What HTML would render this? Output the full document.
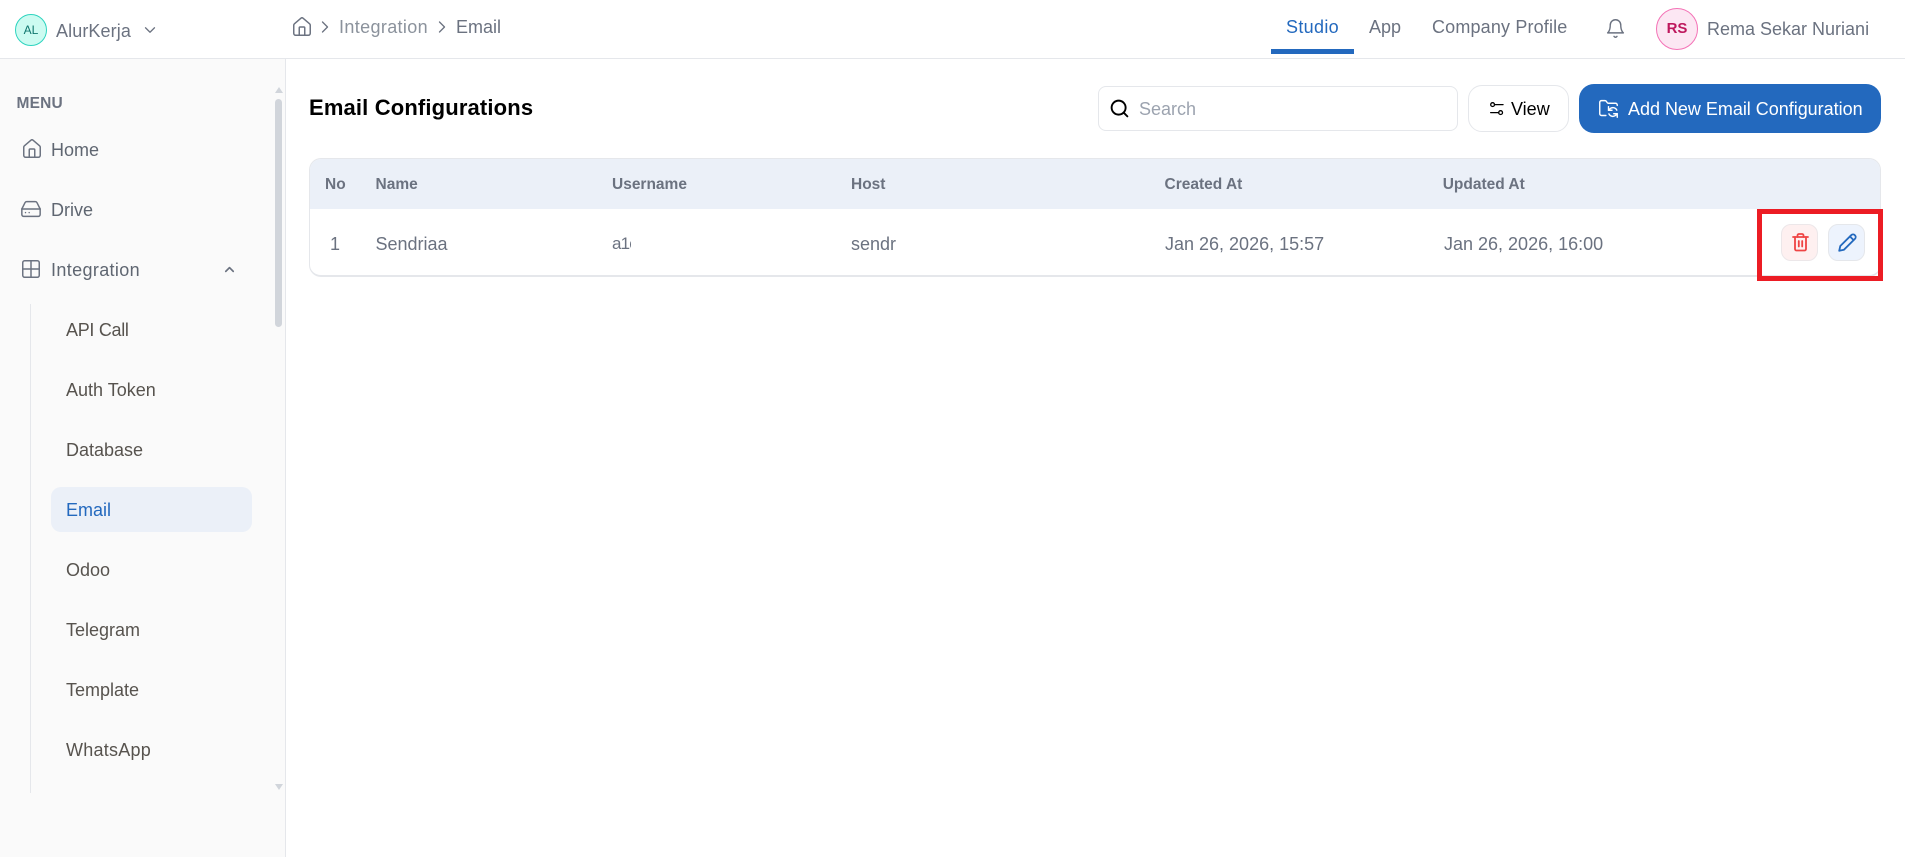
<!DOCTYPE html>
<html lang="en"><head><meta charset="utf-8"><title>Email Configurations</title>
<style>
*{box-sizing:border-box}
html,body{margin:0;padding:0;width:1905px;height:857px;overflow:hidden;background:#fff;font-family:"Liberation Sans",sans-serif;color:#6b7280}
.a{position:absolute}
.t{position:absolute;white-space:nowrap;line-height:20px;font-size:18px}
svg{position:absolute;fill:none;stroke-linecap:round;stroke-linejoin:round}
.th{font-size:15.5px;font-weight:700;color:#6b7280;top:175px}
.td{top:234px;color:#6b7280}
.s{left:66px;color:#57534e}
.n{color:#5f6671}
</style></head><body>
<!-- header -->
<div class="a" style="left:0;top:58px;width:1905px;height:1px;background:#e5e7eb"></div>
<div class="a" style="left:15px;top:14px;width:32px;height:32px;border-radius:50%;background:#ccfbf1;border:1px solid #2dd4bf;color:#0f766e;font-size:12px;line-height:30px;text-align:center">AL</div>
<div class="t" style="left:56px;top:21px;letter-spacing:.1px">AlurKerja</div>
<svg style="left:141px;top:21px" width="18" height="18" viewBox="0 0 24 24" stroke="#6b7280" stroke-width="1.7"><path d="m6 9 6 6 6-6"/></svg>
<svg style="left:290.5px;top:16px" width="22" height="22" viewBox="0 0 24 24" stroke="#6b7280" stroke-width="1.6"><path d="M15 21v-8a1 1 0 0 0-1-1h-4a1 1 0 0 0-1 1v8"/><path d="M3 10a2 2 0 0 1 .709-1.528l7-5.999a2 2 0 0 1 2.582 0l7 5.999A2 2 0 0 1 21 10v9a2 2 0 0 1-2 2H5a2 2 0 0 1-2-2z"/></svg>
<svg style="left:314.5px;top:17px" width="20" height="20" viewBox="0 0 24 24" stroke="#6b7280" stroke-width="1.6"><path d="m9 18 6-6-6-6"/></svg>
<div class="t" style="left:339px;top:17px;letter-spacing:.36px;color:#8b929c">Integration</div>
<svg style="left:431.5px;top:17px" width="20" height="20" viewBox="0 0 24 24" stroke="#6b7280" stroke-width="1.6"><path d="m9 18 6-6-6-6"/></svg>
<div class="t" style="left:456px;top:17px;color:#6b7280">Email</div>
<div class="t" style="left:1286px;top:17px;letter-spacing:.33px;color:#2369be">Studio</div>
<div class="a" style="left:1271px;top:49px;width:83px;height:5px;background:#2369be"></div>
<div class="t" style="left:1369px;top:17px">App</div>
<div class="t" style="left:1432px;top:17px;letter-spacing:.16px">Company Profile</div>
<svg style="left:1604.5px;top:17.5px" width="21" height="21" viewBox="0 0 24 24" stroke="#6b7280" stroke-width="1.6"><path d="M6 8a6 6 0 0 1 12 0c0 7 3 9 3 9H3s3-2 3-9"/><path d="M10.3 21a1.94 1.94 0 0 0 3.4 0"/></svg>
<div class="a" style="left:1656px;top:8px;width:42px;height:42px;border-radius:50%;background:#fce7f3;border:1px solid #f472b6;color:#be185d;font-size:15px;font-weight:700;line-height:40px;text-align:center">RS</div>
<div class="t" style="left:1707px;top:19px">Rema Sekar Nuriani</div>

<!-- sidebar -->
<div class="a" style="left:0;top:59px;width:286px;height:798px;background:#fafafa;border-right:1px solid #e5e7eb"></div>
<div class="t" style="left:16.5px;top:94px;font-size:15.5px;font-weight:700;letter-spacing:.2px">MENU</div>
<div class="a" style="left:275px;top:87px;width:0;height:0;border-left:4px solid transparent;border-right:4px solid transparent;border-bottom:6px solid #d1d5db"></div>
<div class="a" style="left:275px;top:99px;width:7px;height:228px;border-radius:4px;background:#d1d5db"></div>
<div class="a" style="left:275px;top:784px;width:0;height:0;border-left:4px solid transparent;border-right:4px solid transparent;border-top:6px solid #d1d5db"></div>
<svg style="left:20.5px;top:137.5px" width="22" height="22" viewBox="0 0 24 24" stroke="#6b7280" stroke-width="1.6"><path d="M15 21v-8a1 1 0 0 0-1-1h-4a1 1 0 0 0-1 1v8"/><path d="M3 10a2 2 0 0 1 .709-1.528l7-5.999a2 2 0 0 1 2.582 0l7 5.999A2 2 0 0 1 21 10v9a2 2 0 0 1-2 2H5a2 2 0 0 1-2-2z"/></svg>
<div class="t n" style="left:51px;top:140px">Home</div>
<svg style="left:20px;top:198px" width="22" height="22" viewBox="0 0 24 24" stroke="#6b7280" stroke-width="1.6"><path d="M22 12H2"/><path d="M5.45 5.11 2 12v6a2 2 0 0 0 2 2h16a2 2 0 0 0 2-2v-6l-3.45-6.89A2 2 0 0 0 16.76 4H7.24a2 2 0 0 0-1.79 1.11z"/><path d="M6 16h.01M10 16h.01"/></svg>
<div class="t n" style="left:51px;top:200px">Drive</div>
<svg style="left:20px;top:258px" width="22" height="22" viewBox="0 0 24 24" stroke="#6b7280" stroke-width="1.6"><rect x="3" y="3" width="18" height="18" rx="2"/><path d="M3 12h18M12 3v18"/></svg>
<div class="t n" style="left:51px;top:260px;letter-spacing:.36px">Integration</div>
<svg style="left:221.5px;top:262px" width="15" height="15" viewBox="0 0 24 24" stroke="#6b7280" stroke-width="2.6"><path d="m18 15-6-6-6 6"/></svg>
<div class="a" style="left:30px;top:304px;width:1px;height:489px;background:#e5e7eb"></div>
<div class="t s" style="top:320px;letter-spacing:-.3px">API Call</div>
<div class="t s" style="top:380px">Auth Token</div>
<div class="t s" style="top:440px">Database</div>
<div class="a" style="left:51px;top:487px;width:201px;height:45px;border-radius:10px;background:#ebf0f8"></div>
<div class="t s" style="top:500px;color:#2369be">Email</div>
<div class="t s" style="top:560px">Odoo</div>
<div class="t s" style="top:620px">Telegram</div>
<div class="t s" style="top:680px">Template</div>
<div class="t s" style="top:740px;letter-spacing:.25px">WhatsApp</div>

<!-- toolbar -->
<div class="t" style="left:309px;top:98px;font-size:22px;font-weight:700;letter-spacing:.15px;color:#000">Email Configurations</div>
<div class="a" style="left:1098px;top:86px;width:360px;height:45px;border:1px solid #e5e7eb;border-radius:8px;background:#fff"></div>
<svg style="left:1109px;top:98px" width="21" height="21" viewBox="0 0 24 24" stroke="#000" stroke-width="2.2"><circle cx="11" cy="11" r="8"/><path d="m21 21-4.3-4.3"/></svg>
<div class="t" style="left:1139px;top:99px;color:#9ca3af">Search</div>
<div class="a" style="left:1468px;top:85px;width:101px;height:47px;border:1px solid #e5e7eb;border-radius:14px;background:#fff"></div>
<svg style="left:1490px;top:102px" width="14" height="14" viewBox="0 0 14 14" stroke="#000" stroke-width="1.3"><circle cx="2.6" cy="2.6" r="1.9"/><path d="M4.5 2.6h8.5"/><circle cx="10.6" cy="10.6" r="1.9"/><path d="M.7 10.6h8"/></svg>
<div class="t" style="left:1511px;top:99px;color:#000">View</div>
<div class="a" style="left:1579px;top:84px;width:302px;height:49px;border-radius:15px;background:#2369be"></div>
<svg style="left:1597.5px;top:98px" width="21" height="21" viewBox="0 0 24 24" stroke="#fff" stroke-width="1.6"><path d="M9 20H4a2 2 0 0 1-2-2V5a2 2 0 0 1 2-2h3.9a2 2 0 0 1 1.69.9l.81 1.2a2 2 0 0 0 1.67.9H20a2 2 0 0 1 2 2v.5"/><path d="M12 10v4h4"/><path d="m12 14 1.535-1.605a5 5 0 0 1 8 1.5"/><path d="M22 22v-4h-4"/><path d="m22 18-1.535 1.605a5 5 0 0 1-8-1.5"/></svg>
<div class="t" style="left:1628px;top:99px;color:#fff;letter-spacing:-.02px">Add New Email Configuration</div>

<!-- table -->
<div class="a" style="left:309px;top:158px;width:1572px;height:119px;border:1px solid #e5e7eb;border-bottom:2px solid #e5e7eb;border-radius:12px;background:#fff;overflow:hidden">
<div style="height:50px;background:#ebf0f8"></div></div>
<div class="t th" style="left:325px">No</div>
<div class="t th" style="left:375.5px">Name</div>
<div class="t th" style="left:612px">Username</div>
<div class="t th" style="left:851px">Host</div>
<div class="t th" style="left:1164.5px">Created At</div>
<div class="t th" style="left:1442.7px">Updated At</div>
<div class="t td" style="left:330px">1</div>
<div class="t td" style="left:375.5px">Sendriaa</div>
<div class="t td" style="left:612px;width:19px;overflow:hidden;font-size:17px;letter-spacing:-.8px">a1c9</div>
<div class="t td" style="left:851px">sendr</div>
<div class="t td" style="left:1165px">Jan 26, 2026, 15:57</div>
<div class="t td" style="left:1444px">Jan 26, 2026, 16:00</div>
<div class="a" style="left:1781px;top:224px;width:37px;height:37px;border-radius:10px;background:#fef0f0;border:1px solid #ece7e9"></div>
<svg style="left:1791.5px;top:233px" width="17" height="19" viewBox="0 0 17 19" stroke="#ef4444" stroke-width="1.8"><path d="M1 4h15"/><path d="M5.5 4V2.5A1.5 1.5 0 0 1 7 1h3a1.5 1.5 0 0 1 1.5 1.5V4"/><path d="M3 4v12a1.5 1.5 0 0 0 1.5 1.5h8a1.5 1.5 0 0 0 1.5-1.5V4"/><path d="M6.8 8v5.5M10.2 8v5.5"/></svg>
<div class="a" style="left:1828px;top:224px;width:37px;height:37px;border-radius:10px;background:#edf3fd;border:1px solid #e5e7eb"></div>
<svg style="left:1837.7px;top:232.5px" width="19" height="19" viewBox="0 0 19 19" stroke="#2369be" stroke-width="1.8"><path d="M1.2 17.8 2.3 13 13.2 2.2a2.6 2.6 0 0 1 3.7 3.7L6 16.7z"/><path d="M12 3.5 15.5 7"/></svg>
<div class="a" style="left:1757px;top:209px;width:126px;height:72px;border:5px solid #ec1c24"></div>
</body></html>
